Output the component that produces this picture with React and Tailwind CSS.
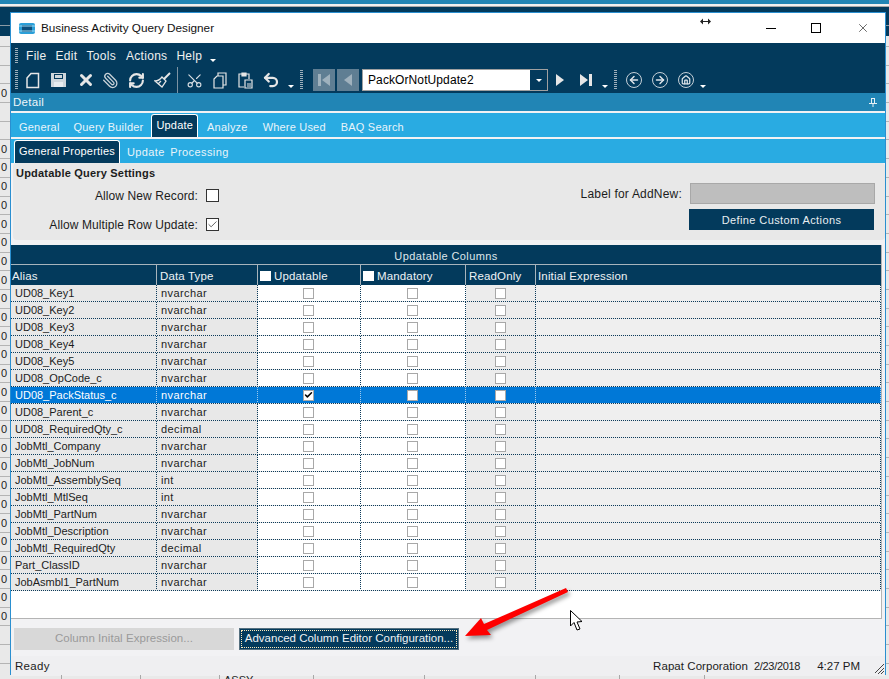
import { Check, X, Paperclip, RefreshCw, Scissors, Undo2, ArrowLeft, ArrowRight, Home } from 'lucide-react';

const font = { fontFamily: '"Liberation Sans", Arial, sans-serif' };

const rows = [
  ['UD08_Key1', 'nvarchar'],
  ['UD08_Key2', 'nvarchar'],
  ['UD08_Key3', 'nvarchar'],
  ['UD08_Key4', 'nvarchar'],
  ['UD08_Key5', 'nvarchar'],
  ['UD08_OpCode_c', 'nvarchar'],
  ['UD08_PackStatus_c', 'nvarchar', true],
  ['UD08_Parent_c', 'nvarchar'],
  ['UD08_RequiredQty_c', 'decimal'],
  ['JobMtl_Company', 'nvarchar'],
  ['JobMtl_JobNum', 'nvarchar'],
  ['JobMtl_AssemblySeq', 'int'],
  ['JobMtl_MtlSeq', 'int'],
  ['JobMtl_PartNum', 'nvarchar'],
  ['JobMtl_Description', 'nvarchar'],
  ['JobMtl_RequiredQty', 'decimal'],
  ['Part_ClassID', 'nvarchar'],
  ['JobAsmbl1_PartNum', 'nvarchar'],
];

// what shows of the list behind the window, left edge
const behind = ['', 'dot', '0', '', '', '0', '0', '0', '0', '0', '0', '0', '0', '0', '0', '0', '0', '0', '0', '0', '0', '0', '0', '0', '0', '0', '0', '0', '0', '0', '0', '', '', 'dot', 'dot'];

const cols = 'grid grid-cols-[146px_101px_103px_105px_70px_1fr]';
const vdot = 'bg-[repeating-linear-gradient(to_bottom,#0b3a5a_0,#0b3a5a_1px,transparent_1px,transparent_2px)] bg-[size:1px_100%] bg-right bg-no-repeat';
const vdotSel = 'bg-[repeating-linear-gradient(to_bottom,#9cc9ee_0,#9cc9ee_1px,transparent_1px,transparent_2px)] bg-[size:1px_100%] bg-right bg-no-repeat';

function Grip({ className = 'h-5' }) {
  return <div className={`w-[3px] shrink-0 bg-[repeating-linear-gradient(to_bottom,#9fb0bc_0,#9fb0bc_1px,transparent_1px,transparent_2px)] ${className}`} />;
}

function Caret({ className = '' }) {
  return <div className={`h-0 w-0 shrink-0 border-x-[3px] border-t-[3px] border-x-transparent border-t-white ${className}`} />;
}

function Box({ on, selected }) {
  return (
    <div className={`flex h-[11px] w-[11px] items-center justify-center border border-[#a8a8a8] ${selected ? 'bg-white' : 'bg-transparent'}`}>
      {on && <Check size={10} strokeWidth={4} className="text-black" />}
    </div>
  );
}

function Row({ alias, type, selected }) {
  const line = selected ? vdotSel : vdot;
  const bg = (c) => (selected ? 'bg-[#0078d7]' : c);
  return (
    <div className={selected ? 'text-white' : 'text-[#1c1c1c]'}>
      <div className={`${cols} h-[16px] grid-rows-[16px] leading-[14px]`}>
        <div className={`${line} ${bg('bg-[#e8e8e8]')} flex items-center pl-[4px] text-[11px]`}>{alias}</div>
        <div className={`${line} ${bg('bg-[#e8e8e8]')} flex items-center pl-[4px] text-[11px] tracking-[0.4px]`}>{type}</div>
        <div className={`${line} ${bg('bg-white')} flex items-center justify-center pr-[2px]`}>
          <Box on={selected} selected={selected} />
        </div>
        <div className={`${line} ${bg('bg-white')} flex items-center justify-center pr-[2px]`}>
          <Box selected={selected} />
        </div>
        <div className={`${line} ${bg('bg-[#ececec]')} flex items-center justify-center pr-[2px]`}>
          <div className="h-[11px] w-[11px] border border-[#a8a8a8] bg-white" />
        </div>
        <div className={`${line} ${bg('bg-[#efefef]')}`} />
      </div>
      <div className="h-px bg-[#e8e8e8] bg-[repeating-linear-gradient(to_right,#0b3a5a_0,#0b3a5a_1px,transparent_1px,transparent_2px)]" />
    </div>
  );
}

function Toolbar() {
  const ic = 'shrink-0 text-[#e6e6e6]';
  return (
    <div className="flex h-[28px] items-center pl-[4px] pt-[2px]">
      <Grip />
      {/* new doc */}
      <svg width="16" height="17" viewBox="0 0 16 17" className="ml-[7px] shrink-0" fill="none" stroke="#e6e6e6" strokeWidth="1.5">
        <path d="M2 6 L6 1.5 H13.5 V15.5 H2 Z" />
      </svg>
      {/* save */}
      <svg width="17" height="16" viewBox="0 0 17 16" className="ml-[9px] shrink-0">
        <path d="M1 1 H16 V15 H1 Z" fill="#cfd6db" />
        <path d="M4 2 H13 V7 H4 Z" fill="#033a5c" />
        <path d="M5 3 H12 V6 H5 Z" fill="#cfd6db" />
        <path d="M4 10 H13 V15 H4 Z" fill="#e8ecef" />
      </svg>
      <X size={18} strokeWidth={4} className={`${ic} ml-[10px]`} />
      <Paperclip size={17} strokeWidth={1.8} className="ml-[7px] shrink-0 -scale-x-100 text-[#c9d2d8]" />
      <RefreshCw size={17} strokeWidth={3} className={`${ic} ml-[9px]`} />
      {/* broom */}
      <svg width="17" height="17" viewBox="0 0 17 17" className="ml-[9px] shrink-0" fill="none" stroke="#e6e6e6" strokeWidth="1.3">
        <path d="M16 1 L10 7" strokeWidth="2" />
        <path d="M8 5 L12 9 L8 15 L1 9 Q5 9 8 5 Z" />
        <path d="M4 12 L7 9" />
      </svg>
      <div className="ml-[6px] h-[26px] w-px shrink-0 bg-[#7d93a3]" />
      <Scissors size={17} strokeWidth={1.6} className="ml-[8px] shrink-0 -rotate-90 text-[#d5dce1]" />
      {/* copy */}
      <svg width="14" height="17" viewBox="0 0 14 17" className="ml-[10px] shrink-0" fill="none" stroke="#e6e6e6" strokeWidth="1.2">
        <path d="M5 4 V1 H13 V13 H10" />
        <path d="M1 7 L4 4 H10 V16 H1 Z" />
      </svg>
      {/* paste */}
      <svg width="15" height="17" viewBox="0 0 15 17" className="ml-[11px] shrink-0" fill="none" stroke="#e6e6e6" strokeWidth="1.2">
        <path d="M4 2 H1 V15 H6" />
        <path d="M8 2 H11 V7" />
        <path d="M4 1 H8 V4 H4 Z" fill="#e6e6e6" />
        <path d="M7 8 H14 V16 H7 Z" />
        <path d="M9 12 H13 M9 14 H13" />
      </svg>
      <Undo2 size={18} strokeWidth={3} className={`${ic} ml-[9px]`} />
      <Caret className="ml-[8px] mt-[13px]" />
      <Grip className="ml-[6px] h-5" />
      <div className="ml-[10px] flex h-[22px] w-[22px] items-center justify-center bg-[#5f7e93]">
        <svg width="14" height="14" viewBox="0 0 14 14"><path d="M1 1 H4 V13 H1 Z M13 1 V13 L5 7 Z" fill="#9fb1bd" /></svg>
      </div>
      <div className="ml-[2px] flex h-[22px] w-[22px] items-center justify-center bg-[#5f7e93]">
        <svg width="10" height="14" viewBox="0 0 10 14"><path d="M9 1 V13 L1 7 Z" fill="#9fb1bd" /></svg>
      </div>
      <div className="ml-[3px] flex h-[22px] w-[186px] items-center border border-[#a0a0a0] bg-white pl-[5px] text-[12px] tracking-[0.1px] text-black">
        <span className="flex-1">PackOrNotUpdate2</span>
        <div className="flex h-full w-[17px] items-center justify-center bg-[#033a5c]"><Caret /></div>
      </div>
      <svg width="10" height="14" viewBox="0 0 10 14" className="ml-[7px] shrink-0"><path d="M1 1 V13 L9 7 Z" fill="#e6e6e6" /></svg>
      <svg width="14" height="14" viewBox="0 0 14 14" className="ml-[14px] shrink-0"><path d="M1 1 L9 7 L1 13 Z M10 1 H13 V13 H10 Z" fill="#e6e6e6" /></svg>
      <Caret className="ml-[9px] mt-[13px]" />
      <Grip className="ml-[6px] h-5" />
      <div className="ml-[9px] flex h-4 w-4 items-center justify-center rounded-full border border-[#c5d0d8]"><ArrowLeft size={12} strokeWidth={3} className="text-[#dfe5ea]" /></div>
      <div className="ml-[10px] flex h-4 w-4 items-center justify-center rounded-full border border-[#c5d0d8]"><ArrowRight size={12} strokeWidth={3} className="text-[#dfe5ea]" /></div>
      <div className="ml-[10px] flex h-4 w-4 items-center justify-center rounded-full border border-[#c5d0d8]"><Home size={10} strokeWidth={3} className="text-[#dfe5ea]" /></div>
      <Caret className="ml-[6px] mt-[13px]" />
    </div>
  );
}

function Tab({ children, active }) {
  if (active) {
    return (
      <div className="flex h-[23px] items-center self-end rounded-t-[3px] border border-b-0 border-white bg-[#033a5c] px-[4px] pb-[1px] text-white">
        {children}
      </div>
    );
  }
  return <div className="pt-[4px] text-[#e8f4fa]">{children}</div>;
}

export default function App() {
  return (
    <div className="relative flex h-[679px] w-[889px] flex-col overflow-hidden bg-[#e9e9e9] text-[12px]" style={font}>
      {/* desktop behind the window */}
      <div className="h-[4px] shrink-0 bg-[#2185b5]" />
      <div className="h-[3px] shrink-0 border-b border-[#a8a8a8] bg-[#f0f0f0]" />
      <div className="h-[5px] shrink-0 bg-[#033a5c]" />

      <div className="flex h-[663px] shrink-0">
        <div className="w-[10px] shrink-0 overflow-hidden">
          <div className="h-[14px] border-b border-[#8a9aa5] bg-[#033a5c]" />
          <div className="h-[10px] bg-[#033a5c]" />
          <div className="h-[11px] border-b border-[#b4b4b4]" />
          {behind.map((v, i) => (
            <div key={i} className="flex h-[18.7px] items-center justify-end border-b border-[#b4b4b4] pr-[3px] text-[11px] leading-none text-[#222]">
              {v === 'dot' ? <div className="-ml-[8px] mr-[8px] h-[6px] w-[3px] rounded-r-full bg-[#2185d0]" /> : v}
            </div>
          ))}
        </div>

        {/* window */}
        <div className="flex h-[663px] w-[876px] shrink-0 flex-col border border-b-[2px] border-[#2a8fd0] bg-[#f2f2f4]">
          <div className="flex h-[30px] shrink-0 items-center bg-white pl-[8px] text-[11.75px] text-[#111]">
            <svg width="16" height="13" viewBox="0 0 16 13" className="shrink-0">
              <rect x="0" y="1" width="16" height="11" rx="2" fill="#2b9fd8" />
              <rect x="3" y="3" width="10" height="7" fill="#0d4f7c" />
              <path d="M0 4 H16 M0 9 H16" stroke="#9fdcf5" strokeWidth="1" />
            </svg>
            <span className="ml-[6px]">Business Activity Query Designer</span>
            <div className="ml-auto flex items-center">
              <svg width="11" height="7" viewBox="0 0 11 7" className="mb-[14px] mr-[55px]">
                <path d="M0 3.5 L3 0.5 V6.5 Z M11 3.5 L8 0.5 V6.5 Z M3 3 H8 V4 H3 Z" fill="#222" />
              </svg>
              <div className="mr-[35px] mt-px h-px w-[10px] bg-black" />
              <div className="mr-[35px] h-[10px] w-[10px] border border-black" />
              <X size={14} strokeWidth={1} className="mr-[15px] text-black" />
            </div>
          </div>

          <div className="h-[50px] shrink-0 bg-[#033a5c]">
            <div className="flex h-[22px] items-center pl-[4px] pt-[3px] text-[12px] tracking-[0.3px] text-[#f0f0f0]">
              <Grip className="h-4" />
              <span className="ml-[8px]">File</span>
              <span className="ml-[9px]">Edit</span>
              <span className="ml-[9px]">Tools</span>
              <span className="ml-[10px]">Actions</span>
              <span className="ml-[9px]">Help</span>
              <Caret className="ml-[8px] mt-[9px]" />
            </div>
            <Toolbar />
          </div>

          <div className="flex h-[18px] shrink-0 items-center justify-between bg-[#2185b5] pl-[2px] pr-[8px] pt-px text-[11.5px] tracking-[0.3px] text-[#eef6fa]">
            <span>Detail</span>
            <svg width="8" height="9" viewBox="0 0 8 9"><path d="M2 0 H6 V5 H8 V6 H4.5 V9 H3.5 V6 H0 V5 H2 Z M3 1 V5 H5 V1 Z" fill="#e8f0f5" fillRule="evenodd" /></svg>
          </div>

          <div className="mt-[2px] flex h-[24px] shrink-0 items-center bg-[#29abe2] pl-[8px] text-[11px] tracking-[0.2px]">
            <Tab>General</Tab>
            <div className="ml-[14px]"><Tab>Query Builder</Tab></div>
            <div className="ml-[8px] flex h-full items-end"><Tab active>Update</Tab></div>
            <div className="ml-[9px]"><Tab>Analyze</Tab></div>
            <div className="ml-[15px]"><Tab>Where Used</Tab></div>
            <div className="ml-[15px]"><Tab>BAQ Search</Tab></div>
          </div>

          <div className="mt-[2px] flex h-[24px] shrink-0 items-center gap-[7px] bg-[#29abe2] pl-[3px] text-[11px] tracking-[0.2px]">
            <div className="flex h-full items-end"><Tab active>General Properties</Tab></div>
            <div className="pt-[3px] text-[#e8f4fa] tracking-[0.4px] [word-spacing:2px]">Update Processing</div>
          </div>

          {/* settings */}
          <div className="ml-[2px] flex h-[77px] shrink-0 justify-between rounded-[4px] bg-[#e8e8e8] text-[#1c1c1c]">
            <div className="w-[206px] pl-[3px]">
              <div className="pt-[3px] text-[11px] font-bold leading-[14px] tracking-[0.2px]">Updatable Query Settings</div>
              <div className="mt-[9px] flex h-[13px] items-center justify-end gap-[8px] tracking-[0.1px]">
                <span>Allow New Record:</span>
                <div className="h-[13px] w-[13px] border border-[#333] bg-white" />
              </div>
              <div className="mt-[16px] flex h-[13px] items-center justify-end gap-[8px] tracking-[0.1px]">
                <span>Allow Multiple Row Update:</span>
                <div className="flex h-[13px] w-[13px] items-center justify-center border border-[#333] bg-white"><Check size={11} strokeWidth={2} className="text-[#555]" /></div>
              </div>
            </div>
            <div className="mr-[10px] flex flex-col items-end pt-[20px]">
              <div className="flex items-center gap-[8px] tracking-[0.2px]">
                <span>Label for AddNew:</span>
                <div className="h-[21px] w-[185px] border border-[#a8a8a8] bg-[#bebebe]" />
              </div>
              <div className="mr-px mt-[5px] flex h-[21px] w-[185px] items-center justify-center bg-[#033a5c] pt-px text-[11px] tracking-[0.4px] text-[#e8eef2]">Define Custom Actions</div>
            </div>
          </div>

          {/* grid */}
          <div className="mr-[3px] mt-[5px] h-[374px] shrink-0 border-b border-r border-[#b4b4b4] bg-white">
            <div className="flex h-[20px] items-center justify-center border-b border-[#a8b4bc] bg-[#033a5c] pt-[3px] text-[11px] tracking-[0.4px] text-[#dfe6eb]">Updatable Columns</div>
            <div className={`${cols} h-[20px] bg-[#033a5c] text-[11.5px] tracking-[0.15px] text-[#eef2f5]`}>
              <div className="flex items-center border-r border-[#a8b4bc] pl-[1px] pt-[3px]">Alias</div>
              <div className="flex items-center border-r border-[#a8b4bc] pl-[3px] pt-[3px]">Data Type</div>
              <div className="flex items-center gap-[3px] border-r border-[#a8b4bc] pl-[2px] pt-[1px]"><div className="h-[10px] w-[11px] bg-white" /><span className="pt-[2px]">Updatable</span></div>
              <div className="flex items-center gap-[3px] border-r border-[#a8b4bc] pl-[2px] pt-[1px]"><div className="h-[10px] w-[11px] bg-white" /><span className="pt-[2px]">Mandatory</span></div>
              <div className="flex items-center border-r border-[#a8b4bc] pl-[3px] pt-[3px]">ReadOnly</div>
              <div className="flex items-center pl-[2px] pt-[3px]">Initial Expression</div>
            </div>
            {rows.map(([alias, type, selected]) => (
              <Row key={alias} alias={alias} type={type} selected={selected} />
            ))}
          </div>

          <div className="flex h-[37px] shrink-0 items-center gap-[5px] pl-[3px] pt-[2px] text-[11.5px]">
            <div className="flex h-[22px] w-[220px] items-center justify-center bg-[#d8d8d8] tracking-[0.05px] text-[#9a9a9a]">Column Inital Expression...</div>
            <div className="flex h-[22px] w-[220px] items-center justify-center border border-[#56707f] bg-[#033a5c] text-[#eef2f5]">
              <div className="flex h-[18px] w-[216px] items-center justify-center whitespace-nowrap border border-dotted border-[#ffe9b8]">Advanced Column Editor Configuration...</div>
            </div>
          </div>

          <div className="flex h-[20px] shrink-0 items-center bg-[#efeff1] pl-[4px] pt-px text-[11.5px] text-[#1c1c1c]">
            <span className="tracking-[0.3px]">Ready</span>
            <span className="ml-auto tracking-[0.05px]">Rapat Corporation</span>
            <span className="ml-[6px] text-[11px] tracking-[-0.3px]">2/23/2018</span>
            <span className="ml-[17px] mr-[25px]">4:27 PM</span>
          </div>
        </div>

        <div className="flex-1 overflow-hidden">
          <div className="h-[14px] border-b border-[#8a9aa5] bg-[#033a5c]" />
          <div className="h-[10px] bg-[#033a5c]" />
          <div className="h-[11px] border-b border-[#b4b4b4]" />
          {behind.map((_, i) => (
            <div key={i} className="h-[18.7px] border-b border-[#b4b4b4]" />
          ))}
        </div>
      </div>

      {/* bottom row of the list behind the window */}
      <div className="flex h-[4px] shrink-0 items-start overflow-hidden text-[11px] leading-[11px] text-[#222]">
        <div className="h-full w-[62px] border-r border-[#a8a8a8]" />
        <div className="h-full w-[79px] border-r border-[#a8a8a8]" />
        <div className="h-full w-[79px] border-r border-[#a8a8a8]" />
        <div className="h-full w-[94px] border-r border-[#a8a8a8] pl-[4px]">ASSY</div>
        <div className="h-full w-[111px] border-r border-[#a8a8a8]" />
        <div className="h-full w-[111px] border-r border-[#a8a8a8]" />
        <div className="h-full w-[84px] border-r border-[#a8a8a8]" />
        <div className="h-full w-[85px] border-r border-[#a8a8a8]" />
      </div>

      {/* annotation arrow and mouse pointer on top of the screenshot */}
      <svg width="889" height="679" viewBox="0 0 889 679" className="pointer-events-none absolute left-0 top-0">
        <path d="M566 588 Q567 590 568 592 L487 630 L491 635 L465 636 L481 618 L484 624 Z" fill="#fe0000" className="drop-shadow-[2px_3px_2px_rgba(0,0,0,0.4)]" />
        <path d="M570.5 610.5 V626 L574 622.5 L577 630 L580 629 L577 622 L582 621.5 Z" fill="#fff" stroke="#000" strokeWidth="1" />
        <path d="M875 673 L884 664 M878 674 L884 668 M881 674 L884 671" stroke="#444" strokeWidth="1" />
      </svg>
    </div>
  );
}
